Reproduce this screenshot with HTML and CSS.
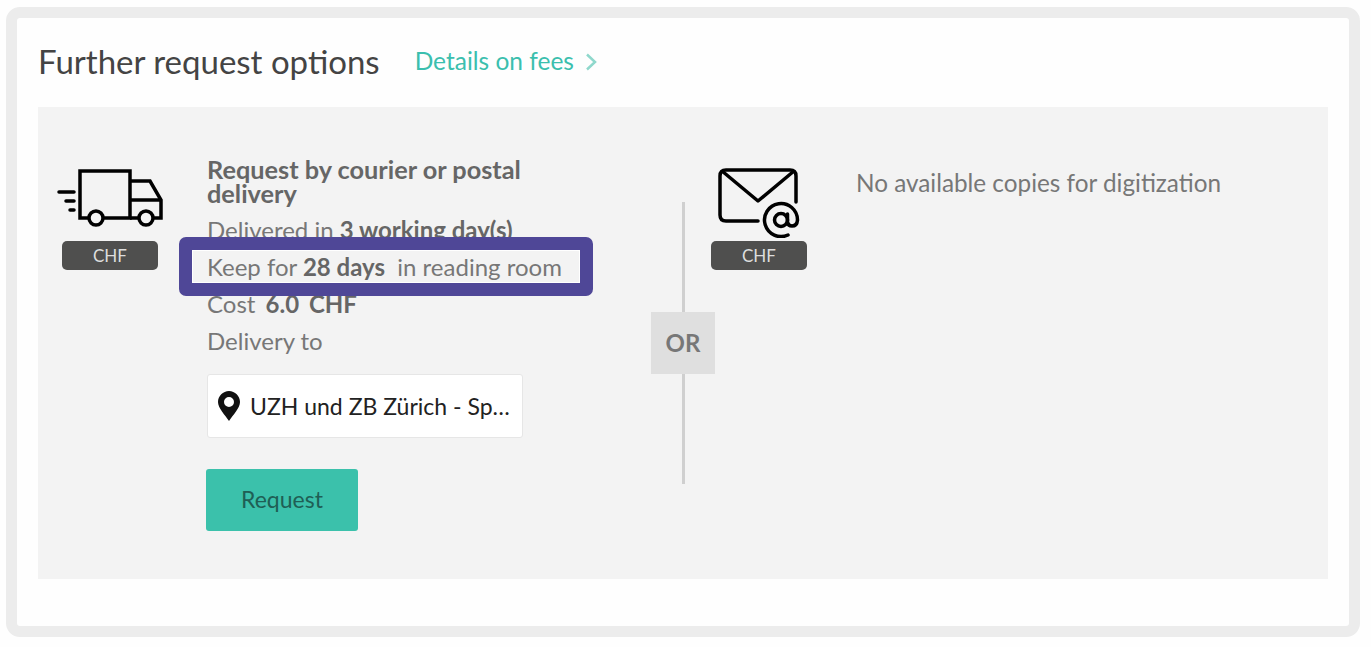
FILE: index.html
```html
<!DOCTYPE html>
<html>
<head>
    <meta charset="UTF-8">
    <meta name="viewport" content="width=device-width, initial-scale=1.0">
    <title>Further request options</title>
    <link rel="stylesheet" href="styles.css">
</head>
<body>
    <div class="card">
        <div class="card-header">
            <h1>Further request options</h1>
            <a class="fees-link" href="#">Details on fees
                <svg class="chevron" width="12" height="18" viewBox="0 0 12 18"><path d="M2 1.500 L10 9 L2 16.500" fill="none" stroke="#8fd8cc" stroke-width="2.500"/></svg>
            </a>
        </div>

        <div class="panel">
            <div class="method">
                <svg class="truck-icon" width="110" height="60" viewBox="0 0 110 60" fill="none" stroke="#000" stroke-width="3.500">
                    <path d="M33 50 H24 V3 H74 V50 H47"/>
                    <path d="M74 13 H94 L105 32 V50 H97"/>
                    <path d="M74 32 H105"/>
                    <path d="M74 50 H83"/>
                    <circle cx="40" cy="50" r="7"/>
                    <circle cx="90" cy="50" r="7"/>
                    <path d="M3 24 H18 M10 33 H18" stroke-linecap="round"/>
                    <path d="M14 42 H18" stroke-linecap="round"/>
                </svg>
                <div class="chip">CHF</div>
            </div>

            <div class="details">
                <h2>Request by courier or postal delivery</h2>
                <div class="line">Delivered in <b>3 working day(s)</b></div>
                <div class="line keep-line">
                    Keep for <b>28 days</b>&nbsp; in reading room
                    <div class="highlight"></div>
                </div>
                <div class="line cost-line">Cost <b>6.0 CHF</b></div>
                <div class="line">Delivery to</div>
                <div class="location">
                    <svg width="22" height="30" viewBox="0 0 22 30"><path fill-rule="evenodd" d="M11 0 C17 0 22 5 22 11 C22 17 15 24 11 30 C7 24 0 17 0 11 C0 5 5 0 11 0 Z M11 6 A5 5 0 1 0 11 16 A5 5 0 1 0 11 6 Z" fill="#111"/></svg>
                    <span class="location-name">UZH und ZB Zürich - Sp…</span>
                </div>
                <button class="request-btn">Request</button>
            </div>

            <div class="divider">
                <div class="divider-line"></div>
                <div class="or-box">OR</div>
                <div class="divider-line"></div>
            </div>

            <div class="method method-mail">
                <svg class="mail-icon" width="90" height="72" viewBox="0 0 90 72" fill="none" stroke="#000" stroke-width="3.500">
                    <path d="M42 55 H10 Q4 55 4 49 V10 Q4 4 10 4 H74 Q80 4 80 10 V36" stroke-linecap="round"/>
                    <path d="M6 5 L42 35 L78 5" stroke-linejoin="round"/>
                    <circle cx="65" cy="54" r="6.500"/>
                    <path d="M71.500 48 V56 Q72 60 76 60 Q81 60 81.500 54 A16.500 16.500 0 1 0 72 69" stroke-linecap="round"/>
                </svg>
                <div class="chip">CHF</div>
            </div>

            <div class="no-copies">No available copies for digitization</div>
        </div>
    </div>
</body>
</html>
```

FILE: styles.css
```css
* {
    box-sizing: border-box;
}

body {
    margin: 0;
    height: 647px;
    padding: 7px 11px 10px 6px;
    font-family: "Lato", "Noto Sans", sans-serif;
    background-color: #fefefe;
    overflow: hidden;
}

.card {
    height: 630px;
    padding: 0 21px 0 21px;
    background-color: #fefefe;
    border: 11px solid #ececec;
    border-radius: 14px;
}

.card-header {
    display: flex;
    align-items: center;
    height: 89px;
    padding-bottom: 4px;
}

h1 {
    margin: 0 35px 0 0;
    font-size: 33px;
    font-weight: 400;
    color: #444;
}

.fees-link {
    display: flex;
    align-items: center;
    gap: 11px;
    font-size: 24.500px;
    color: #3bbfae;
    text-decoration: none;
}

.chevron {
    margin-top: 3px;
}

.panel {
    display: flex;
    align-items: flex-start;
    height: 472px;
    padding: 61px 0 0 24px;
    background-color: #f3f3f3;
}

.method {
    display: flex;
    flex-direction: column;
    align-items: center;
    width: 96px;
}

.truck-icon {
    flex: none;
    margin-left: 2px;
    margin-bottom: 13px;
}

.mail-icon {
    flex: none;
    margin-top: -2px;
    margin-left: 4px;
    margin-bottom: 3px;
}

.chip {
    width: 96px;
    height: 29px;
    border-radius: 5px;
    background-color: #4f4f4e;
    color: #ddd;
    font-size: 17px;
    line-height: 29px;
    text-align: center;
}

.details {
    width: 400px;
    margin-top: -11px;
    margin-left: 49px;
    color: #777;
    font-size: 24px;
}

h2 {
    width: 340px;
    margin: 0 0 6px;
    font-size: 25.300px;
    line-height: 24px;
    font-weight: 700;
    color: #666;
}

.line {
    height: 37px;
    line-height: 37px;
}

.line b {
    color: #666;
}

.cost-line {
    word-spacing: 4px;
}

.keep-line {
    position: relative;
}

.highlight {
    position: absolute;
    left: -28px;
    top: -11px;
    width: 414px;
    height: 59px;
    border: 13px solid #4f4797;
    border-radius: 7px;
    outline: 1px solid #fff;
    outline-offset: -14px;
}

.location {
    display: flex;
    align-items: center;
    gap: 10px;
    width: 316px;
    height: 64px;
    margin-top: 15px;
    padding-left: 10px;
    padding-bottom: 1px;
    background-color: #fff;
    border: 1px solid #e6e6e6;
    border-radius: 3px;
    color: #222;
    font-size: 23px;
}

.location-name {
    white-space: nowrap;
}

.request-btn {
    display: block;
    width: 152px;
    height: 62px;
    margin-top: 31px;
    margin-left: -1px;
    padding-bottom: 3px;
    background-color: #3bc1ab;
    border: none;
    border-radius: 3px;
    color: #1f5f55;
    font-family: inherit;
    font-size: 23px;
}

.divider {
    display: flex;
    flex-direction: column;
    align-items: center;
    width: 64px;
    height: 282px;
    margin-top: 34px;
    margin-left: 44px;
}

.divider-line {
    flex: 1;
    width: 3px;
    background-color: #cfcfcf;
}

.or-box {
    width: 64px;
    height: 62px;
    background-color: #dfdfdf;
    color: #777;
    font-size: 24px;
    font-weight: 700;
    line-height: 62px;
    text-align: center;
}

.method-mail {
    margin-left: -4px;
}

.no-copies {
    margin-left: 49px;
    color: #777;
    font-size: 24.300px;
    line-height: 30px;
}
```
